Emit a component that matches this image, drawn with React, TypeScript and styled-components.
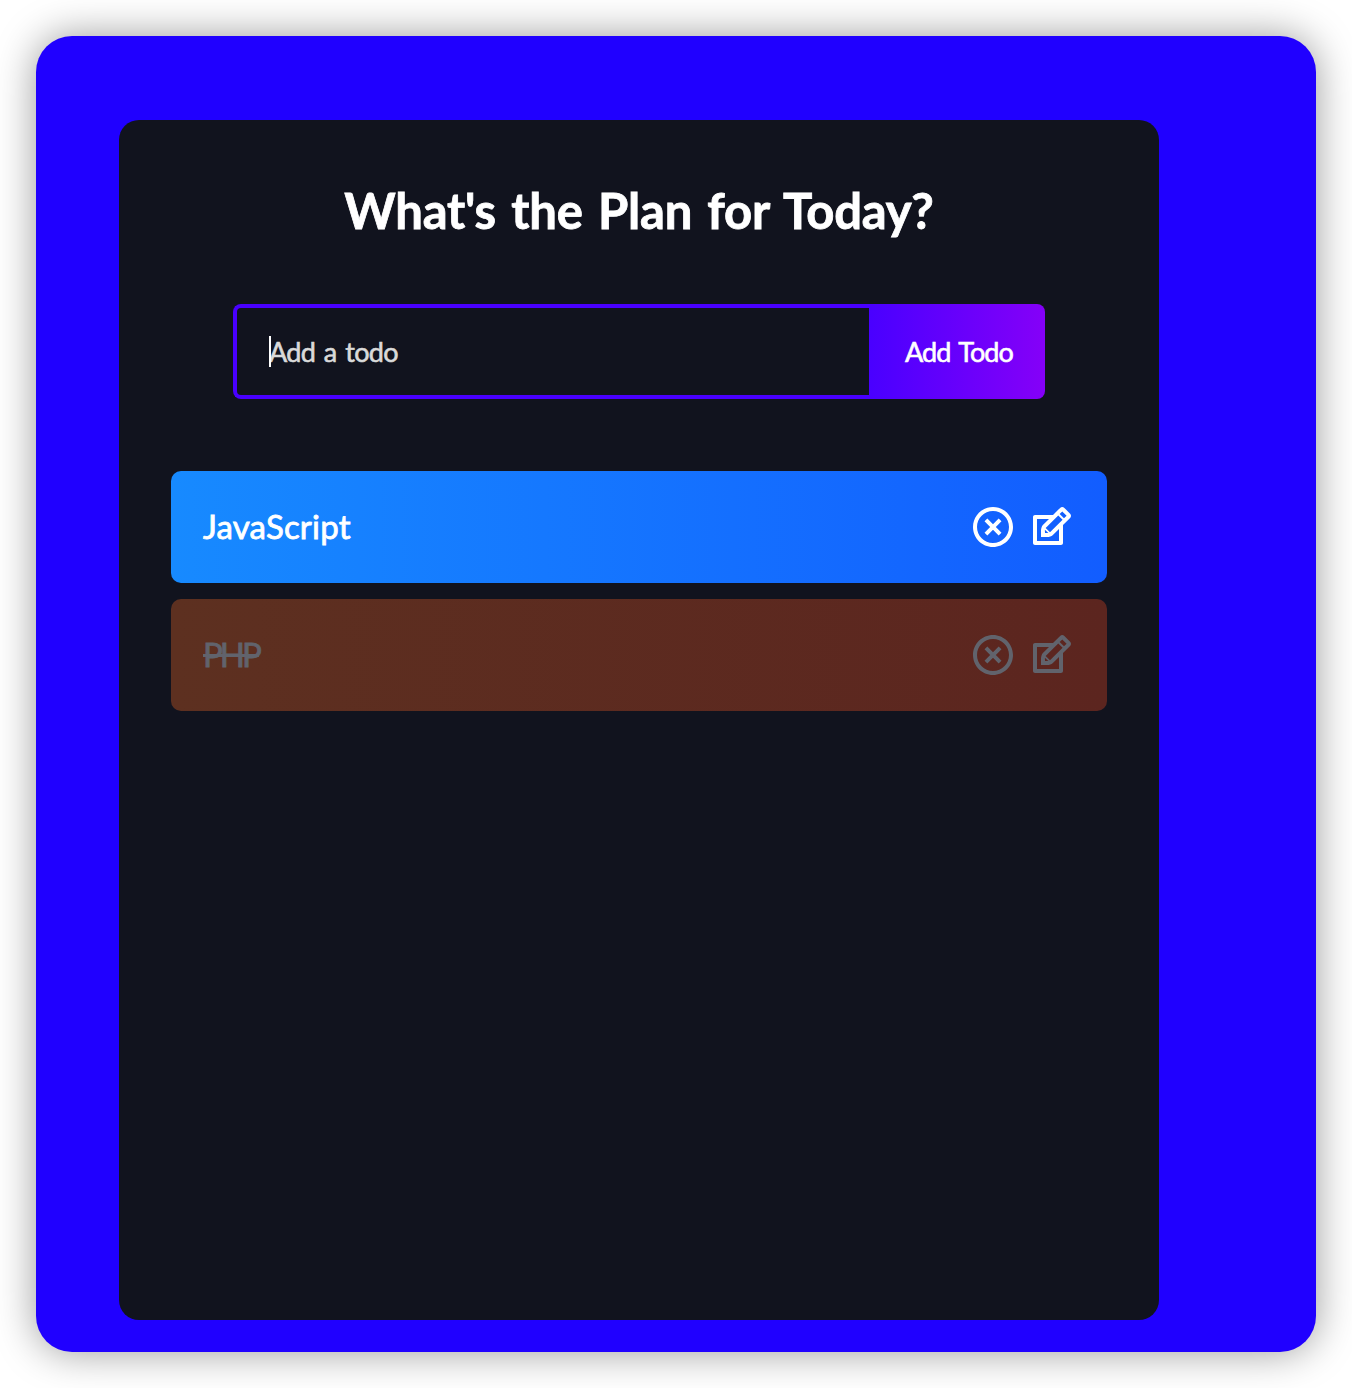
import React from "react";
import styled, { createGlobalStyle } from "styled-components";
import { RiCloseCircleLine } from "react-icons/ri";
import { TiEdit } from "react-icons/ti";

const GlobalStyle = createGlobalStyle`
  * { box-sizing: border-box; }
  body {
    margin: 0;
    background: #fff;
    font-family: "Trebuchet MS", Lato, "Open Sans", sans-serif;
  }
`;

const Page = styled.main`
  display: flex;
  height: 1388px;
  padding: 36px;
  overflow: hidden;
`;

const Window = styled.div`
  flex: 1;
  padding: 84px 157px 32px 83px;
  border-radius: 36px;
  background: #2000ff;
  box-shadow: 0 0 40px rgba(0, 0, 0, 0.4);
`;

const Card = styled.section`
  display: flex;
  flex-direction: column;
  align-items: center;
  height: 1200px;
  padding-top: 64px;
  border-radius: 20px;
  background: #11131e;
`;

const Title = styled.h1`
  margin: 0 0 64px;
  height: 56px;
  color: #fff;
  font-size: 49px;
  line-height: 53px;
  font-weight: 700;
  letter-spacing: -0.2px;
  word-spacing: 3.6px;
  -webkit-text-stroke: 0.8px currentColor;
  white-space: nowrap;
`;

const Form = styled.form`
  display: flex;
  height: 95px;
  margin-bottom: 72px;
`;

const Field = styled.div`
  position: relative;
  width: 636px;
`;

const Caret = styled.i`
  position: absolute;
  left: 36px;
  top: 32px;
  width: 2px;
  height: 31px;
  background: #fff;
`;

const Input = styled.input`
  width: 100%;
  height: 95px;
  padding: 0 32px;
  border: 4px solid #4900ff;
  border-right: 0;
  border-radius: 8px 0 0 8px;
  outline: none;
  background: transparent;
  color: #fff;
  font: 400 27px "Trebuchet MS", Lato, "Open Sans", sans-serif;
  letter-spacing: -0.7px;
  word-spacing: 2.5px;
  caret-color: transparent;

  &::placeholder {
    color: #dadada;
    opacity: 1;
    -webkit-text-stroke: 0.6px #dadada;
  }
`;

const AddButton = styled.button`
  width: 176px;
  padding: 0 0 1px 4px;
  border: 0;
  border-radius: 0 8px 8px 0;
  background: linear-gradient(90deg, #4900ff 0%, #8500f8 100%);
  color: #fff;
  font: 400 27px "Trebuchet MS", Lato, "Open Sans", sans-serif;
  letter-spacing: -0.9px;
  word-spacing: 2.5px;
  -webkit-text-stroke: 0.6px currentColor;
  white-space: nowrap;
`;

const List = styled.div`
  display: flex;
  flex-direction: column;
  gap: 16px;
  width: 936px;
`;

const Row = styled.div<{ $done: boolean }>`
  display: flex;
  align-items: center;
  justify-content: space-between;
  height: 112px;
  padding: 0 32px;
  border-radius: 10px;
  color: ${({ $done }) => ($done ? "#61636c" : "#fff")};
  background: ${({ $done }) =>
    $done
      ? "linear-gradient(90deg, #5d3020 0%, #5c251f 100%)"
      : "linear-gradient(90deg, #178aff 0%, #125dff 100%)"};
`;

const Label = styled.span<{ $done: boolean }>`
  padding-bottom: 2px;
  font-size: 33px;
  line-height: 38px;
  font-weight: 400;
  letter-spacing: ${({ $done }) => ($done ? "-3px" : "0.2px")};
  text-decoration: ${({ $done }) => ($done ? "line-through" : "none")};
  -webkit-text-stroke: 0.8px currentColor;
`;

const Icons = styled.div`
  display: flex;
  gap: 10px;
  font-size: 48px;

  svg {
    display: block;
  }
`;

const todos = [
  { text: "JavaScript", done: false },
  { text: "PHP", done: true },
];

export default function App() {
  return (
    <Page>
      <GlobalStyle />
      <Window>
        <Card>
          <Title>What's the Plan for Today?</Title>
          <Form onSubmit={(e) => e.preventDefault()}>
            <Field>
              <Input placeholder="Add a todo" />
              <Caret />
            </Field>
            <AddButton>Add Todo</AddButton>
          </Form>
          <List>
            {todos.map(({ text, done }) => (
              <Row key={text} $done={done}>
                <Label $done={done}>{text}</Label>
                <Icons>
                  <RiCloseCircleLine />
                  <TiEdit />
                </Icons>
              </Row>
            ))}
          </List>
        </Card>
      </Window>
    </Page>
  );
}
